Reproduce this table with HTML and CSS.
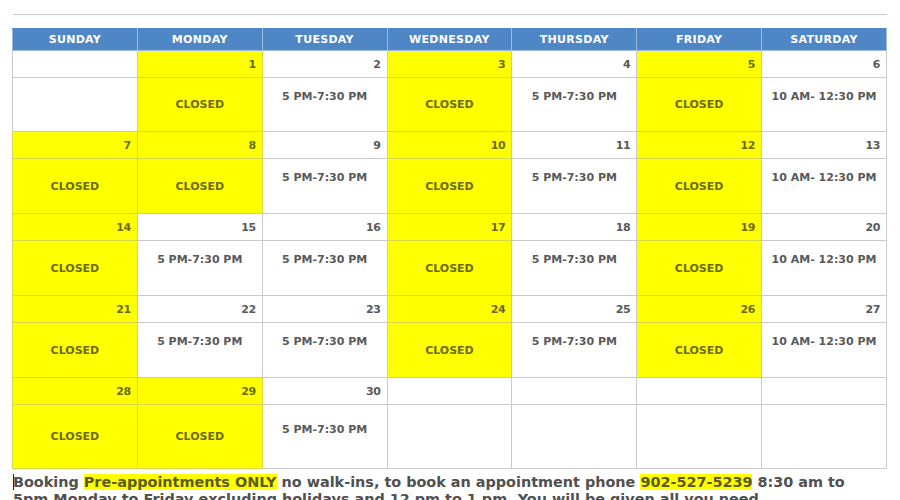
FILE: index.html
```html
<!DOCTYPE html>
<html>
<head>
<meta charset="utf-8">
<link rel="stylesheet" href="styles.css">
</head>
<body>
<div class="page">
  <div class="rule"></div>
  <table class="cal">
    <thead>
      <tr><th>SUNDAY</th><th>MONDAY</th><th>TUESDAY</th><th>WEDNESDAY</th><th>THURSDAY</th><th>FRIDAY</th><th>SATURDAY</th></tr>
    </thead>
    <tbody>
      <tr class="date">
        <td></td><td class="y">1</td><td>2</td><td class="y">3</td><td>4</td><td class="y">5</td><td>6</td>
      </tr>
      <tr class="body first">
        <td></td><td class="y closed">CLOSED</td><td class="time">5 PM-7:30 PM</td><td class="y closed">CLOSED</td><td class="time">5 PM-7:30 PM</td><td class="y closed">CLOSED</td><td class="time">10 AM- 12:30 PM</td>
      </tr>
      <tr class="date">
        <td class="y">7</td><td class="y">8</td><td>9</td><td class="y">10</td><td>11</td><td class="y">12</td><td>13</td>
      </tr>
      <tr class="body">
        <td class="y closed">CLOSED</td><td class="y closed">CLOSED</td><td class="time">5 PM-7:30 PM</td><td class="y closed">CLOSED</td><td class="time">5 PM-7:30 PM</td><td class="y closed">CLOSED</td><td class="time">10 AM- 12:30 PM</td>
      </tr>
      <tr class="date">
        <td class="y">14</td><td>15</td><td>16</td><td class="y">17</td><td>18</td><td class="y">19</td><td>20</td>
      </tr>
      <tr class="body">
        <td class="y closed">CLOSED</td><td class="time">5 PM-7:30 PM</td><td class="time">5 PM-7:30 PM</td><td class="y closed">CLOSED</td><td class="time">5 PM-7:30 PM</td><td class="y closed">CLOSED</td><td class="time">10 AM- 12:30 PM</td>
      </tr>
      <tr class="date">
        <td class="y">21</td><td>22</td><td>23</td><td class="y">24</td><td>25</td><td class="y">26</td><td>27</td>
      </tr>
      <tr class="body">
        <td class="y closed">CLOSED</td><td class="time">5 PM-7:30 PM</td><td class="time">5 PM-7:30 PM</td><td class="y closed">CLOSED</td><td class="time">5 PM-7:30 PM</td><td class="y closed">CLOSED</td><td class="time">10 AM- 12:30 PM</td>
      </tr>
      <tr class="date">
        <td class="y">28</td><td class="y">29</td><td>30</td><td></td><td></td><td></td><td></td>
      </tr>
      <tr class="body last">
        <td class="y closed">CLOSED</td><td class="y closed">CLOSED</td><td class="time">5 PM-7:30 PM</td><td></td><td></td><td></td><td></td>
      </tr>
    </tbody>
  </table>
  <p class="note"><span class="caret"></span>Booking <mark>Pre-appointments ONLY</mark> no walk-ins, to book an appointment phone <mark>902-527-5239</mark> 8:30 am to<br>5pm Monday to Friday excluding holidays and 12 pm to 1 pm. You will be given all you need.</p>
</div>
</body>
</html>
```
FILE: styles.css
```css
html, body {
  margin: 0;
  padding: 0;
  background: #ffffff;
}
.page {
  width: 875px;
  margin-left: 12px;
  padding-top: 14px;
  font-family: "DejaVu Sans", "Liberation Sans", sans-serif;
}
.rule {
  height: 1px;
  background: #c8c8c8;
  margin-left: 1px;
  margin-bottom: 13px;
}
.cal {
  width: 875px;
  border-collapse: collapse;
  table-layout: fixed;
}
.cal th {
  background: #4f86c6;
  color: #ffffff;
  font-size: 11px;
  font-weight: bold;
  letter-spacing: 0.3px;
  height: 21px;
  padding: 0;
  border: 1px solid #9fbde0;
  border-top-color: #4f86c6;
  text-align: center;
}
.cal td {
  border: 1px solid #c9c9c9;
  padding: 0;
  color: #595959;
  font-weight: bold;
  font-size: 11px;
}
.cal .date td {
  height: 26px;
  text-align: right;
  padding-right: 6px;
  letter-spacing: -0.4px;
}
.cal .body td {
  height: 54px;
  text-align: center;
}
.cal .body.first td {
  height: 53px;
}
.cal .body.last td {
  height: 63px;
}
.cal td.y {
  background: #ffff00;
  color: #6b6b1a;
  border-color: #d6d64a;
}
.cal td.closed {
  vertical-align: middle;
}
.cal td.time {
  vertical-align: top;
  padding-top: 12px;
  height: 42px;
}
.cal .body.first td.time {
  height: 41px;
}
.cal .body.last td.time {
  padding-top: 18px;
  height: 45px;
}
.note {
  margin: 0;
  margin-top: 5px;
  margin-left: 1px;
  font-size: 14.4px;
  line-height: 17px;
  font-weight: bold;
  color: #505050;
  white-space: nowrap;
}
.note mark {
  background: #ffff00;
  color: #5a5a1c;
}
.caret {
  display: inline-block;
  width: 1px;
  height: 16px;
  background: #222222;
  vertical-align: -3px;
  margin-right: -1px;
}
```
